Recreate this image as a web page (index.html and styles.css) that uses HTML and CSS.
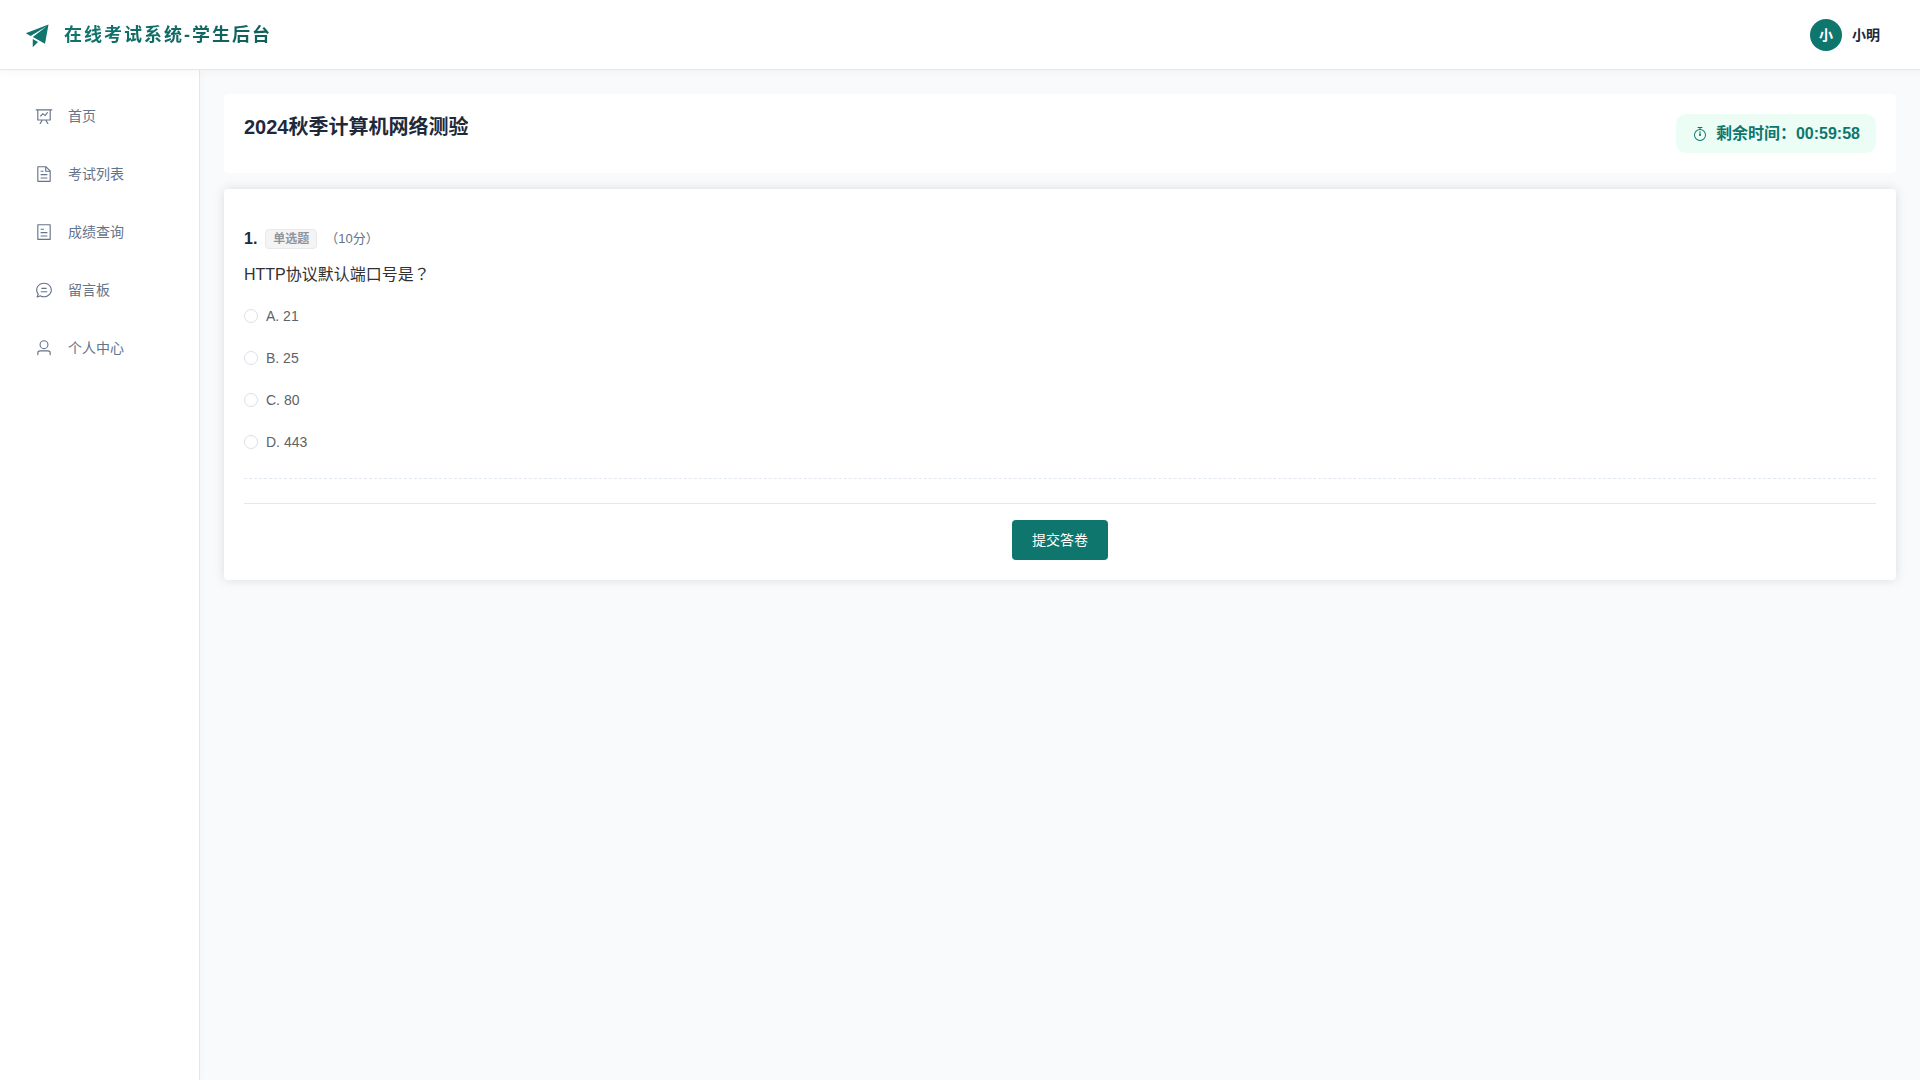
FILE: index.html
```html
<!DOCTYPE html>
<html lang="zh-CN">
<head>
<meta charset="utf-8">
<meta name="viewport" content="width=device-width, initial-scale=1">
<title>在线考试系统-学生后台</title>
<link rel="stylesheet" href="styles.css">
</head>
<body>
<header class="topbar">
  <div class="brand">
    <svg class="brand-icon" viewBox="0 0 1024 1024" aria-hidden="true"><path d="m64 448 832-320-128 704-446.08-243.328L832 192 242.816 545.536zm256 512V657.024L512 768z"/></svg>
    <span class="brand-name">在线考试系统-学生后台</span>
  </div>
  <div class="account">
    <span class="avatar">小</span>
    <span class="account-name">小明</span>
  </div>
</header>
<div class="shell">
  <nav class="sidebar">
    <a class="nav-item" href="#home">
      <svg class="nav-icon" viewBox="0 0 1024 1024" aria-hidden="true"><path d="M359.168 768H160a32 32 0 0 1-32-32V192H64a32 32 0 0 1 0-64h896a32 32 0 1 1 0 64h-64v544a32 32 0 0 1-32 32H665.216l110.848 192h-73.856L591.36 768H433.024L322.176 960H248.32zM832 192H192v512h640zM342.656 534.656a32 32 0 1 1-45.312-45.312L444.992 341.76l125.44 94.08L679.04 300.032a32 32 0 1 1 49.92 39.936L581.632 524.224 451.008 426.24z"/></svg>
      <span>首页</span>
    </a>
    <a class="nav-item" href="#exams">
      <svg class="nav-icon" viewBox="0 0 1024 1024" aria-hidden="true"><path d="M832 384H576V128H192v768h640zm-26.496-64L640 154.496V320zM160 64h480l256 256v608a32 32 0 0 1-32 32H160a32 32 0 0 1-32-32V96a32 32 0 0 1 32-32m160 448h384v64H320zm0-192h160v64H320zm0 384h384v64H320z"/></svg>
      <span>考试列表</span>
    </a>
    <a class="nav-item" href="#scores">
      <svg class="nav-icon" viewBox="0 0 1024 1024" aria-hidden="true"><path d="M192 128v768h640V128zm-32-64h704a32 32 0 0 1 32 32v832a32 32 0 0 1-32 32H160a32 32 0 0 1-32-32V96a32 32 0 0 1 32-32m160 448h384v64H320zm0-192h192v64H320zm0 384h384v64H320z"/></svg>
      <span>成绩查询</span>
    </a>
    <a class="nav-item" href="#messages">
      <svg class="nav-icon" viewBox="0 0 1024 1024" aria-hidden="true"><path d="m174.72 855.68 135.296-45.12 23.68 11.84C388.096 849.536 448.576 864 512 864c211.84 0 384-166.784 384-352S723.84 160 512 160 128 326.784 128 512c0 69.12 24.96 139.264 70.848 199.232l22.08 28.8-46.272 115.584zm-45.248 82.56A32 32 0 0 1 89.6 896l58.368-145.92C94.72 680.32 64 596.864 64 512 64 299.904 256 96 512 96s448 203.904 448 416-192 416-448 416a461.056 461.056 0 0 1-206.912-48.384l-175.616 58.56zM352 576h320q32 0 32 32t-32 32H352q-32 0-32-32t32-32m32-192h256q32 0 32 32t-32 32H384q-32 0-32-32t32-32"/></svg>
      <span>留言板</span>
    </a>
    <a class="nav-item" href="#profile">
      <svg class="nav-icon" viewBox="0 0 1024 1024" aria-hidden="true"><path d="M512 512a192 192 0 1 0 0-384 192 192 0 0 0 0 384m0 64a256 256 0 1 1 0-512 256 256 0 0 1 0 512m320 320v-96a96 96 0 0 0-96-96H288a96 96 0 0 0-96 96v96a32 32 0 1 1-64 0v-96a160 160 0 0 1 160-160h448a160 160 0 0 1 160 160v96a32 32 0 1 1-64 0"/></svg>
      <span>个人中心</span>
    </a>
  </nav>
  <main class="content">
    <section class="exam-header">
      <h1 class="exam-title">2024秋季计算机网络测验</h1>
      <div class="timer">
        <svg class="timer-icon" viewBox="0 0 1024 1024" aria-hidden="true"><path d="M512 896a320 320 0 1 0 0-640 320 320 0 0 0 0 640m0 64a384 384 0 1 1 0-768 384 384 0 0 1 0 768"/><path d="M512 320a32 32 0 0 1 32 32l-.512 224a32 32 0 1 1-64 0L480 352a32 32 0 0 1 32-32"/><path d="M448 576a64 64 0 1 0 128 0 64 64 0 1 0-128 0m96-448v128h-64V128h-96a32 32 0 0 1 0-64h256a32 32 0 1 1 0 64z"/></svg>
        <span>剩余时间：00:59:58</span>
      </div>
    </section>
    <form class="paper">
      <fieldset class="question" aria-labelledby="q1-text">
        <div class="question-meta">
          <span class="question-number">1.</span>
          <span class="tag">单选题</span>
          <span class="score">（10分）</span>
        </div>
        <p class="question-text" id="q1-text">HTTP协议默认端口号是？</p>
        <div class="options">
          <label class="option"><input class="radio" type="radio" name="q1" value="A">A. 21</label>
          <label class="option"><input class="radio" type="radio" name="q1" value="B">B. 25</label>
          <label class="option"><input class="radio" type="radio" name="q1" value="C">C. 80</label>
          <label class="option"><input class="radio" type="radio" name="q1" value="D">D. 443</label>
        </div>
      </fieldset>
      <div class="actions">
        <button class="submit" type="submit">提交答卷</button>
      </div>
    </form>
  </main>
</div>
</body>
</html>
```

FILE: styles.css
```css
*,
*::before,
*::after {
  box-sizing: border-box;
}

body {
  margin: 0;
  min-height: 100vh;
  display: flex;
  flex-direction: column;
  background: #f8fafc;
  color: #1e293b;
  font-family: "Liberation Sans", "Noto Sans CJK SC", sans-serif;
  font-size: 14px;
  line-height: 16px;
}

svg {
  flex: none;
  fill: currentColor;
}

.topbar {
  position: relative;
  z-index: 2;
  display: flex;
  align-items: center;
  justify-content: space-between;
  height: 70px;
  padding: 0 40px 0 24px;
  background: #fff;
  border-bottom: 1px solid #e2e8f0;
  box-shadow: 0 2px 8px rgba(0, 0, 0, 0.04);
}

.brand {
  display: flex;
  align-items: center;
  gap: 12px;
  color: #0f766e;
}

.brand-icon {
  width: 28px;
  height: 28px;
}

.brand-name {
  font-size: 18px;
  font-weight: 700;
  letter-spacing: 2px;
  line-height: 24px;
  background: linear-gradient(135deg, #0f766e, #115e59);
  background-clip: text;
  -webkit-background-clip: text;
  color: transparent;
}

.account {
  display: flex;
  align-items: center;
  gap: 10px;
  font-weight: 700;
}

.avatar {
  display: grid;
  place-items: center;
  width: 32px;
  height: 32px;
  border-radius: 50%;
  background: #0f766e;
  color: #fff;
}

.shell {
  flex: 1;
  display: flex;
}

.sidebar {
  flex: none;
  display: flex;
  flex-direction: column;
  gap: 8px;
  width: 200px;
  padding: 21px 12px;
  background: #fff;
  border-right: 1px solid #e2e8f0;
  box-shadow: 2px 0 8px rgba(0, 0, 0, 0.02);
}

.nav-item {
  display: flex;
  align-items: center;
  gap: 15px;
  height: 50px;
  padding: 0 23px;
  color: #64748b;
  text-decoration: none;
}

.nav-icon {
  width: 18px;
  height: 18px;
}

.content {
  flex: 1;
  min-width: 0;
  padding: 24px;
}

.exam-header {
  display: flex;
  align-items: flex-start;
  justify-content: space-between;
  margin-bottom: 16px;
  padding: 20px;
  background: #fff;
  border-radius: 4px;
}

.exam-title {
  margin: 0;
  font-size: 20px;
  line-height: 26px;
}

.timer {
  display: flex;
  align-items: center;
  gap: 8px;
  padding: 8px 16px;
  border-radius: 10px;
  background: #ecfdf5;
  color: #0f766e;
  font-size: 16px;
  font-weight: 700;
  line-height: 23px;
}

.timer-icon {
  width: 16px;
  height: 16px;
}

.paper {
  padding: 20px;
  background: #fff;
  border-radius: 4px;
  box-shadow: 0 0 12px rgba(0, 0, 0, 0.12);
}

.question {
  min-width: 0;
  margin: 0;
  padding: 20px 0;
  border: 0;
  border-bottom: 1px dashed #e2e8f0;
}

.question-meta {
  display: flex;
  align-items: center;
  gap: 8px;
  height: 20px;
}

.question-number {
  font-size: 16px;
  font-weight: 700;
}

.tag {
  height: 20px;
  padding: 0 7px;
  border: 1px solid #e9e9eb;
  border-radius: 4px;
  background: #f4f4f5;
  color: #909399;
  font-size: 12px;
  font-weight: 700;
  line-height: 18px;
}

.score {
  color: #64748b;
  font-size: 13px;
}

/* Full-width punctuation centred in its cell */
.question-text {
  margin: 14px 0 13px;
  color: #303133;
  font-family: "Liberation Sans", "Noto Sans CJK TC", sans-serif;
  font-feature-settings: "locl" 0;
  font-size: 16px;
  line-height: 24px;
}

.options {
  display: flex;
  flex-direction: column;
  align-items: flex-start;
  gap: 10px;
}

.option {
  display: flex;
  align-items: center;
  gap: 8px;
  height: 32px;
  color: #606266;
  cursor: pointer;
}

.radio {
  appearance: none;
  width: 14px;
  height: 14px;
  margin: 0;
  border: 1px solid #dcdfe6;
  border-radius: 50%;
  background: #fff;
}

.radio:checked {
  border: 4px solid #0f766e;
}

.actions {
  display: flex;
  justify-content: center;
  margin-top: 24px;
  padding-top: 16px;
  border-top: 1px solid #e2e8f0;
}

.submit {
  height: 40px;
  padding: 0 20px;
  border: 0;
  border-radius: 4px;
  background: #0f766e;
  color: #fff;
  font: inherit;
  cursor: pointer;
}
```
